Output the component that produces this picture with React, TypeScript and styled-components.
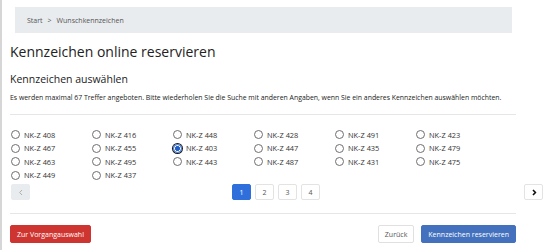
import React from "react";
import styled, { createGlobalStyle } from "styled-components";

const GlobalStyle = createGlobalStyle`
  html, body {
    margin: 0;
    padding: 0;
    background: #ffffff;
  }
  body {
    font-family: "Open Sans", "Noto Sans", Arial, sans-serif;
    color: #222;
  }
`;

const Page = styled.div`
  box-sizing: border-box;
  width: 549px;
  height: 250px;
  overflow: hidden;
  border-left: 2px solid #d6d6d6;
  padding: 7px 0 0 8px;
`;

const Content = styled.div`
  width: 506px;
`;

const Breadcrumb = styled.nav`
  display: flex;
  align-items: center;
  gap: 5px;
  height: 26px;
  margin: 0 4px 0 5px;
  padding: 0 12px;
  background: #e9ecef;
  font-size: 7px;
  color: #555;
`;

const Crumb = styled.span`
  color: #555;
`;

const Title = styled.h1`
  margin: 10px 0 0;
  font-size: 14px;
  font-weight: 400;
  line-height: 18px;
  color: #222;
`;

const SubTitle = styled.h2`
  margin: 11px 0 0;
  font-size: 10.5px;
  font-weight: 500;
  line-height: 14px;
  color: #222;
`;

const Info = styled.p`
  margin: 7px 0 0;
  font-size: 6.9px;
  line-height: 10px;
  color: #222;
  white-space: nowrap;
`;

const Divider = styled.hr<{ $gap: number }>`
  border: 0;
  border-top: 1px solid #e6e6e6;
  margin: ${({ $gap }) => $gap}px 0 0;
`;

const OptionGrid = styled.div`
  display: grid;
  grid-template-columns: repeat(6, 81px);
  grid-auto-rows: 13.5px;
  margin: 13px 0 0 1px;
`;

const Option = styled.label`
  display: flex;
  align-items: center;
  gap: 4px;
  font-size: 7.4px;
  color: #333;
`;

const Circle = styled.span<{ $checked?: boolean }>`
  box-sizing: border-box;
  width: 9px;
  height: 9px;
  border-radius: 50%;
  border: ${({ $checked }) => ($checked ? "1px solid #1f5fc9" : "1px solid #6f6f6f")};
  background: ${({ $checked }) =>
    $checked ? "radial-gradient(circle, #1f5fc9 0 2.2px, #fff 2.6px)" : "#fff"};
  box-shadow: ${({ $checked }) => ($checked ? "0 0 0 1px #1a1a1a" : "none")};
  flex: none;
`;

const Pager = styled.div`
  display: flex;
  align-items: center;
  margin: 2px -27px 0 1px;
  height: 16px;
`;

const PageList = styled.div`
  display: flex;
  gap: 4px;
  margin: 0 auto;
  padding-right: 2px;
`;

const PageButton = styled.span<{ $active?: boolean; $muted?: boolean }>`
  box-sizing: border-box;
  display: flex;
  align-items: center;
  justify-content: center;
  width: 19px;
  height: 16px;
  border-radius: 2px;
  font-size: 7px;
  border: 1px solid ${({ $active, $muted }) => ($active ? "#2f6fdb" : $muted ? "#e9ecef" : "#e3e3e3")};
  background: ${({ $active, $muted }) => ($active ? "#2f6fdb" : $muted ? "#e9ecef" : "#fff")};
  color: ${({ $active, $muted }) => ($active ? "#fff" : $muted ? "#b5b5b5" : "#555")};
`;

const Footer = styled.div`
  display: flex;
  align-items: center;
  gap: 7px;
  margin-top: 11px;
`;

const Spacer = styled.div`
  flex: 1;
`;

const Button = styled.span<{ $variant: "danger" | "light" | "primary" }>`
  box-sizing: border-box;
  display: flex;
  align-items: center;
  height: 18px;
  padding: 0 6px;
  border-radius: 2px;
  font-size: 7px;
  border: 1px solid
    ${({ $variant }) =>
      $variant === "danger" ? "#cf3530" : $variant === "primary" ? "#4471bd" : "#e0e0e0"};
  background: ${({ $variant }) =>
    $variant === "danger" ? "#cf3530" : $variant === "primary" ? "#4471bd" : "#fff"};
  color: ${({ $variant }) => ($variant === "light" ? "#555" : "#fff")};
`;

const numbers = [
  "408", "416", "448", "428", "491", "423",
  "467", "455", "403", "447", "435", "479",
  "463", "495", "443", "487", "431", "475",
  "449", "437",
];

const Chevron = ({ dir, color, weight }: { dir: "left" | "right"; color: string; weight: number }) => (
  <svg width="6" height="7" viewBox="0 0 6 7">
    <path
      d={dir === "left" ? "M4 1 L1.6 3.5 L4 6" : "M2 1 L4.4 3.5 L2 6"}
      fill="none"
      stroke={color}
      strokeWidth={weight}
    />
  </svg>
);

export default function App() {
  return (
    <>
      <GlobalStyle />
      <Page>
        <Content>
          <Breadcrumb>
            <Crumb>Start</Crumb>
            <Crumb>&gt;</Crumb>
            <Crumb>Wunschkennzeichen</Crumb>
          </Breadcrumb>

          <Title>Kennzeichen online reservieren</Title>
          <SubTitle>Kennzeichen auswählen</SubTitle>
          <Info>
            Es werden maximal 67 Treffer angeboten. Bitte wiederholen Sie die Suche mit anderen
            Angaben, wenn Sie ein anderes Kennzeichen auswählen möchten.
          </Info>
          <Divider $gap={11} />

          <OptionGrid>
            {numbers.map((n) => (
              <Option key={n}>
                <Circle $checked={n === "403"} />
                NK-Z {n}
              </Option>
            ))}
          </OptionGrid>

          <Pager>
            <PageButton $muted>
              <Chevron dir="left" color="#b0b0b0" weight={1} />
            </PageButton>
            <PageList>
              <PageButton $active>1</PageButton>
              <PageButton>2</PageButton>
              <PageButton>3</PageButton>
              <PageButton>4</PageButton>
            </PageList>
            <PageButton>
              <Chevron dir="right" color="#111" weight={1.6} />
            </PageButton>
          </Pager>

          <Divider $gap={13} />

          <Footer>
            <Button $variant="danger">Zur Vorgangauswahl</Button>
            <Spacer />
            <Button $variant="light">Zurück</Button>
            <Button $variant="primary">Kennzeichen reservieren</Button>
          </Footer>
        </Content>
      </Page>
    </>
  );
}
